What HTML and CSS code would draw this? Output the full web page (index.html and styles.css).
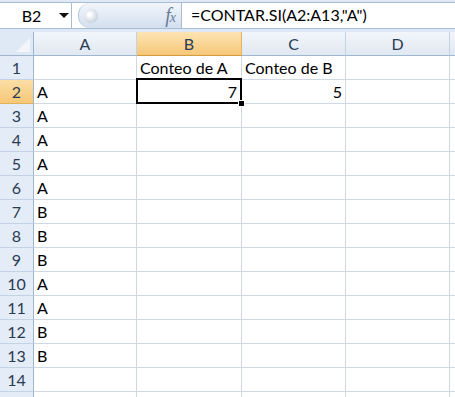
FILE: index.html
```html
<!DOCTYPE html>
<html lang="es">
<head>
	<meta charset="UTF-8">
	<title>Hoja de cálculo</title>
	<link rel="stylesheet" href="styles.css">
</head>
<body>
	<div class="app">
		<div class="fbar">
			<div class="namebox">
				<span class="ref">B2</span>
				<span class="drop"></span>
			</div>
			<div class="grip">
				<span class="knob"></span>
				<span class="fx">f<small>x</small></span>
			</div>
			<div class="formula">=CONTAR.SI(A2:A13,"A")</div>
		</div>
		<div class="sheet">
			<div class="corner"><span class="tri"></span></div>
			<div class="colhead">A</div>
			<div class="colhead sel">B</div>
			<div class="colhead">C</div>
			<div class="colhead">D</div>
			<div class="colhead last"></div>

			<div class="rowhead">1</div>
			<div class="cell"></div>
			<div class="cell">Conteo de A</div>
			<div class="cell">Conteo de B</div>
			<div class="cell"></div>
			<div class="cell last"></div>

			<div class="rowhead sel">2</div>
			<div class="cell">A</div>
			<div class="cell num active">7<span class="handle"></span></div>
			<div class="cell num">5</div>
			<div class="cell"></div>
			<div class="cell last"></div>

			<div class="rowhead">3</div><div class="cell">A</div><div class="cell"></div><div class="cell"></div><div class="cell"></div><div class="cell last"></div>
			<div class="rowhead">4</div><div class="cell">A</div><div class="cell"></div><div class="cell"></div><div class="cell"></div><div class="cell last"></div>
			<div class="rowhead">5</div><div class="cell">A</div><div class="cell"></div><div class="cell"></div><div class="cell"></div><div class="cell last"></div>
			<div class="rowhead">6</div><div class="cell">A</div><div class="cell"></div><div class="cell"></div><div class="cell"></div><div class="cell last"></div>
			<div class="rowhead">7</div><div class="cell">B</div><div class="cell"></div><div class="cell"></div><div class="cell"></div><div class="cell last"></div>
			<div class="rowhead">8</div><div class="cell">B</div><div class="cell"></div><div class="cell"></div><div class="cell"></div><div class="cell last"></div>
			<div class="rowhead">9</div><div class="cell">B</div><div class="cell"></div><div class="cell"></div><div class="cell"></div><div class="cell last"></div>
			<div class="rowhead">10</div><div class="cell">A</div><div class="cell"></div><div class="cell"></div><div class="cell"></div><div class="cell last"></div>
			<div class="rowhead">11</div><div class="cell">A</div><div class="cell"></div><div class="cell"></div><div class="cell"></div><div class="cell last"></div>
			<div class="rowhead">12</div><div class="cell">B</div><div class="cell"></div><div class="cell"></div><div class="cell"></div><div class="cell last"></div>
			<div class="rowhead">13</div><div class="cell">B</div><div class="cell"></div><div class="cell"></div><div class="cell"></div><div class="cell last"></div>
			<div class="rowhead">14</div><div class="cell"></div><div class="cell"></div><div class="cell"></div><div class="cell"></div><div class="cell last"></div>
			<div class="rowhead"></div><div class="cell"></div><div class="cell"></div><div class="cell"></div><div class="cell"></div><div class="cell last"></div>
		</div>
	</div>
</body>
</html>
```

FILE: styles.css
```css
body{
	margin:0;
	background:#fff;
	font-family:Lato,"Open Sans",sans-serif;
	overflow:hidden;
}
.app{
	width:455px;
	height:397px;
	overflow:hidden;
	background:#dfe8f5;
}
.fbar{
	display:flex;
	height:25px;
	margin-top:2px;
	border-top:1px solid #a9bcd6;
	border-bottom:1px solid #a9bcd6;
	background:#fff;
}
.namebox{
	width:72px;
	display:flex;
	align-items:center;
	border-right:1px solid #a9bcd6;
	box-sizing:border-box;
	font-size:16px;
	color:#000;
}
.namebox .ref{
	flex:1;
	text-align:center;
	padding-left:4px;
}
.namebox .drop{
	width:0;
	height:0;
	border-left:5px solid transparent;
	border-right:5px solid transparent;
	border-top:5px solid #111;
	margin-right:2px;
}
.grip{
	width:104px;
	display:flex;
	align-items:center;
	justify-content:space-between;
	background:linear-gradient(#f2f6fb,#d3dfef);
	border-left:1px solid #b5c6dc;
	border-right:1px solid #a9bcd6;
	border-radius:12px 0 0 12px;
	margin-left:6px;
	box-sizing:border-box;
}
.grip .knob{
	width:14px;
	height:14px;
	border-radius:50%;
	margin-left:5px;
	background:radial-gradient(circle at 40% 40%,#fff 10%,#c9d3de 70%,#b7c3d1);
}
.grip .fx{
	font:italic 20px "Liberation Serif",serif;
	color:#6a7e9a;
	margin-right:6px;
	letter-spacing:-1px;
}
.grip .fx small{
	font-size:14px;
}
.formula{
	flex:1;
	padding-left:9px;
	font-size:16px;
	line-height:24px;
	color:#000;
	white-space:nowrap;
}
.sheet{
	display:grid;
	grid-template-columns:34px 103px 105px 104px 104px 1fr;
	grid-template-rows:24px;
	grid-auto-rows:24px;
	margin-top:3px;
	background:#fff;
}
.corner{
	background:#dfe8f5;
	border-right:1px solid #9eb6ce;
	border-bottom:1px solid #9eb6ce;
	position:relative;
	box-sizing:border-box;
}
.corner .tri{
	position:absolute;
	right:3px;
	bottom:3px;
	width:0;
	height:0;
	border-left:14px solid transparent;
	border-bottom:14px solid #f2f5f9;
}
.colhead{
	background:linear-gradient(#f3f6fb,#e0e8f2);
	border-right:1px solid #c5d2e3;
	border-bottom:1px solid #9eb6ce;
	box-sizing:border-box;
	text-align:center;
	font-size:16px;
	line-height:23px;
	color:#2a3b52;
}
.colhead.sel{
	background:linear-gradient(#fce4b3,#f6c779);
	border-right-color:#e6b35c;
	border-bottom-color:#d39c3e;
}
.colhead.last{
	border-right:none;
}
.rowhead{
	background:#e4ecf7;
	border-right:1px solid #9eb6ce;
	border-bottom:1px solid #c5d2e3;
	box-sizing:border-box;
	text-align:center;
	font-size:16px;
	line-height:23px;
	color:#2a3b52;
}
.rowhead.sel{
	background:linear-gradient(#fbdfa6,#f6c776);
	border-bottom-color:#e0b15e;
}
.cell{
	border-right:1px solid #d0d7e5;
	border-bottom:1px solid #d0d7e5;
	box-sizing:border-box;
	font-size:16px;
	line-height:23px;
	padding:0 3px;
	white-space:nowrap;
	color:#000;
	position:relative;
}
.cell.last{
	border-right:none;
}
.cell.num{
	text-align:right;
}
.cell.active{
	padding-right:4px;
	z-index:1;
}
.cell.active::after{
	content:"";
	position:absolute;
	top:-2px;
	left:-1px;
	right:-1px;
	bottom:-1px;
	border:2px solid #000;
}
.cell .handle{
	position:absolute;
	right:-4px;
	bottom:-4px;
	width:5px;
	height:5px;
	background:#000;
	border:1px solid #fff;
	z-index:2;
}
```
